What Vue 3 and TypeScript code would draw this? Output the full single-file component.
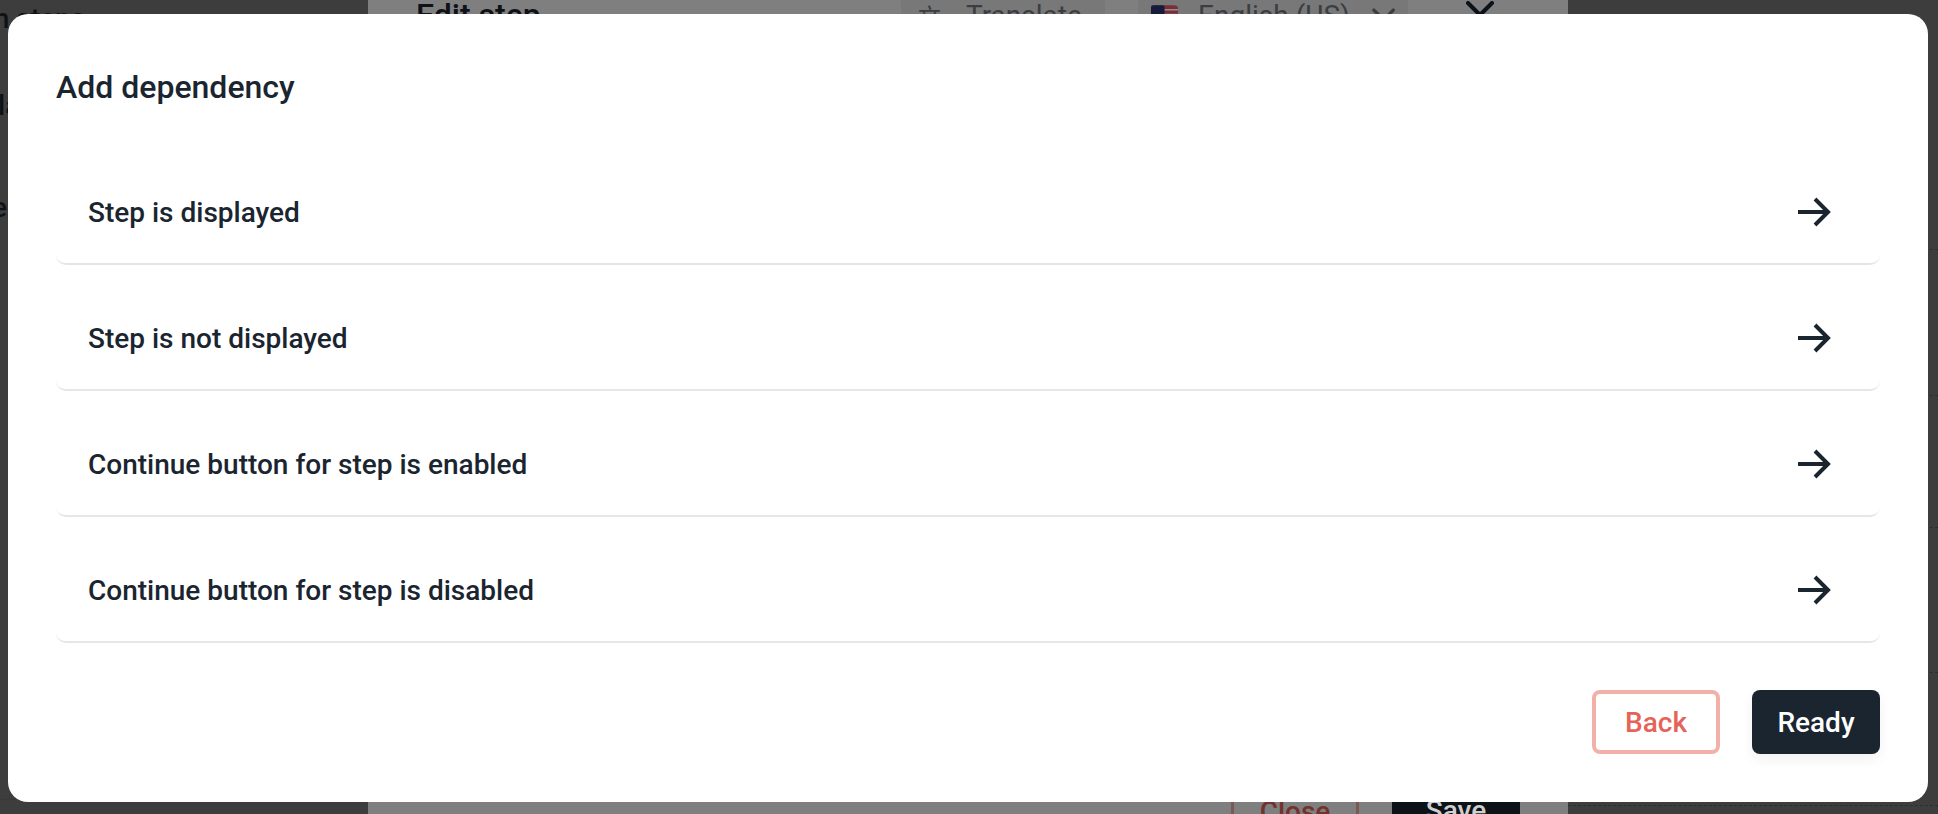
<template>
  <div class="page">
    <div class="backdrop">
      <div class="side side-left">
        <span class="side-title">m steps</span>
        <span class="side-line">la</span>
        <span class="side-line side-last">e</span>
        <div class="side-rule"></div>
      </div>
      <div class="editor">
        <div class="editor-head">
          <span class="editor-title">Edit step</span>
          <div class="editor-tools">
            <span class="tool tool-translate">
              <span class="translate-icon">文</span>
              Translate
            </span>
            <span class="tool tool-lang">
              <svg class="flag" viewBox="0 0 28 21">
                <rect width="28" height="21" rx="4" fill="#7a2f37" />
                <path d="M0 4.5h28M0 9.5h28M0 14.5h28M0 19h28" stroke="#8d8d8d" stroke-width="1.6" />
                <rect width="14" height="11" rx="2" fill="#161c3c" />
              </svg>
              <span class="lang-name">English (US)</span>
              <svg class="chevron" viewBox="0 0 24 14">
                <path d="M2 2l10 10L22 2" fill="none" stroke="#3a3e42" stroke-width="3.5" stroke-linecap="round" />
              </svg>
            </span>
            <svg class="close-x" viewBox="0 0 28 28">
              <path d="M2 2l24 24M26 2L2 26" fill="none" stroke="#0c1218" stroke-width="4" stroke-linecap="round" />
            </svg>
          </div>
        </div>
        <div class="editor-foot">
          <span class="foot-btn foot-close">Close</span>
          <span class="foot-btn foot-save">Save</span>
        </div>
      </div>
      <div class="side side-right">
        <div v-for="h in rowHeights" :key="h" class="side-row" :style="{ height: h + 'px' }"></div>
      </div>
    </div>

    <div class="modal">
      <h2 class="modal-title">Add dependency</h2>
      <div class="options">
        <div v-for="option in options" :key="option" class="option">
          <span class="option-text">{{ option }}</span>
          <svg class="arrow" viewBox="0 0 36 36">
            <path d="M2 18h30M19 5l13 13-13 13" fill="none" stroke="#1a2530" stroke-width="4" stroke-linejoin="miter" />
          </svg>
        </div>
      </div>
      <div class="actions">
        <button class="btn btn-back">Back</button>
        <button class="btn btn-ready">Ready</button>
      </div>
    </div>
  </div>
</template>

<script setup lang="ts">
const options: string[] = [
  'Step is displayed',
  'Step is not displayed',
  'Continue button for step is enabled',
  'Continue button for step is disabled'
]

// rows of the page behind the modal, only their dashed edges show
const rowHeights: number[] = [250, 146, 132, 145, 133]
</script>

<style>
html,
body {
  margin: 0;
  overflow: hidden;
}
</style>

<style scoped>
.page {
  position: relative;
  width: 1938px;
  height: 814px;
  overflow: hidden;
  font-family: Roboto, 'Noto Sans', sans-serif;
  color: #1a2530;
}

.backdrop {
  position: absolute;
  inset: 0;
  display: flex;
  background: #3d3d3d;
}

.side {
  flex: none;
  display: flex;
  flex-direction: column;
  font-size: 28px;
  font-weight: 500;
  line-height: 32px;
  color: #0e1216;
}

.side-left {
  width: 368px;
  padding-top: 3px;
  box-sizing: border-box;
}

.side-title {
  margin-left: -15px;
  white-space: nowrap;
}

.side-line {
  margin-top: 55px;
  margin-left: -2px;
}

.side-last {
  margin-top: 70px;
  margin-left: -8px;
}

.side-rule {
  margin-top: auto;
  margin-bottom: 14px;
  height: 1px;
  background: #383838;
}

.side-right {
  width: 370px;
}

.side-row {
  box-sizing: border-box;
  border-bottom: 1px dashed #2f2f2f;
}

.editor {
  flex: 1;
  background: #7f7f7f;
  display: flex;
  flex-direction: column;
  justify-content: space-between;
}

.editor-head {
  display: flex;
  justify-content: space-between;
  align-items: center;
  height: 30px;
  padding: 0 74px 0 48px;
}

.editor-title {
  font-size: 32px;
  font-weight: 500;
  color: #0e1216;
}

.editor-tools {
  display: flex;
  align-items: center;
  font-size: 28px;
  color: #3a3e42;
}

.tool {
  display: flex;
  align-items: center;
  box-sizing: border-box;
  height: 30px;
  padding: 0 13px;
  background: #787878;
}

.tool-translate {
  width: 204px;
  padding-left: 17px;
  gap: 25px;
  margin-right: 33px;
}

.translate-icon {
  font-family: 'Noto Sans CJK SC', sans-serif;
  font-size: 23px;
}

.tool-lang {
  width: 270px;
  margin-right: 58px;
}

.flag {
  width: 28px;
  height: 21px;
}

.lang-name {
  margin: 0 22px 0 20px;
  white-space: nowrap;
}

.chevron {
  width: 24px;
  height: 14px;
}

.close-x {
  width: 28px;
  height: 28px;
}

.editor-foot {
  display: flex;
  justify-content: flex-end;
  gap: 33px;
  height: 34px;
  padding-right: 48px;
  overflow: hidden;
}

.foot-btn {
  width: 128px;
  height: 64px;
  box-sizing: border-box;
  flex: none;
  font-size: 28px;
  font-weight: 500;
  line-height: 62px;
  text-align: center;
}

.foot-close {
  border: 3px solid #7b5854;
  line-height: 58px;
  color: #73322d;
}

.foot-save {
  background: #0c1218;
  color: #cfcfcf;
}

.modal {
  position: absolute;
  left: 8px;
  top: 14px;
  width: 1920px;
  height: 788px;
  box-sizing: border-box;
  padding: 48px;
  background: #fff;
  border-radius: 20px;
  display: flex;
  flex-direction: column;
}

.modal-title {
  margin: 0;
  font-size: 32px;
  line-height: 50px;
  font-weight: 500;
}

.options {
  display: flex;
  flex-direction: column;
  gap: 20px;
  margin-top: 47px;
}

.option {
  display: flex;
  align-items: center;
  justify-content: space-between;
  height: 106px;
  box-sizing: border-box;
  padding: 2px 48px 0 32px;
  border-bottom: 2px solid #e6e6e6;
  border-radius: 0 0 10px 10px;
}

.option-text {
  font-size: 28px;
  font-weight: 500;
}

.arrow {
  width: 36px;
  height: 36px;
}

.actions {
  margin-top: auto;
  display: flex;
  justify-content: flex-end;
  gap: 32px;
}

.btn {
  width: 128px;
  height: 64px;
  box-sizing: border-box;
  border-radius: 8px;
  font-family: inherit;
  font-size: 28px;
  font-weight: 500;
  cursor: pointer;
}

.btn-back {
  background: #fff;
  border: 4px solid #f3b0a9;
  color: #e5645a;
}

.btn-ready {
  background: #1a2530;
  border: none;
  color: #fff;
  box-shadow: 0 6px 12px rgba(26, 37, 48, 0.06);
}
</style>
